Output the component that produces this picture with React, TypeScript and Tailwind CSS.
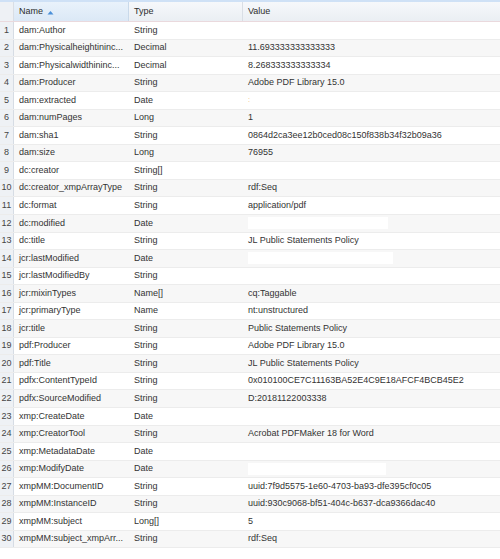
import React from 'react';

type Row = { name: string; type: string; value?: string; blank?: number; dot?: boolean };

const rows: Row[] = [
  { name: 'dam:Author', type: 'String' },
  { name: 'dam:Physicalheightininc...', type: 'Decimal', value: '11.693333333333333' },
  { name: 'dam:Physicalwidthininc...', type: 'Decimal', value: '8.268333333333334' },
  { name: 'dam:Producer', type: 'String', value: 'Adobe PDF Library 15.0' },
  { name: 'dam:extracted', type: 'Date', dot: true },
  { name: 'dam:numPages', type: 'Long', value: '1' },
  { name: 'dam:sha1', type: 'String', value: '0864d2ca3ee12b0ced08c150f838b34f32b09a36' },
  { name: 'dam:size', type: 'Long', value: '76955' },
  { name: 'dc:creator', type: 'String[]', blank: 100 },
  { name: 'dc:creator_xmpArrayType', type: 'String', value: 'rdf:Seq' },
  { name: 'dc:format', type: 'String', value: 'application/pdf' },
  { name: 'dc:modified', type: 'Date', blank: 140 },
  { name: 'dc:title', type: 'String', value: 'JL Public Statements Policy' },
  { name: 'jcr:lastModified', type: 'Date', blank: 145 },
  { name: 'jcr:lastModifiedBy', type: 'String' },
  { name: 'jcr:mixinTypes', type: 'Name[]', value: 'cq:Taggable' },
  { name: 'jcr:primaryType', type: 'Name', value: 'nt:unstructured' },
  { name: 'jcr:title', type: 'String', value: 'Public Statements Policy' },
  { name: 'pdf:Producer', type: 'String', value: 'Adobe PDF Library 15.0' },
  { name: 'pdf:Title', type: 'String', value: 'JL Public Statements Policy' },
  { name: 'pdfx:ContentTypeId', type: 'String', value: '0x010100CE7C11163BA52E4C9E18AFCF4BCB45E2' },
  { name: 'pdfx:SourceModified', type: 'String', value: 'D:20181122003338' },
  { name: 'xmp:CreateDate', type: 'Date', blank: 140 },
  { name: 'xmp:CreatorTool', type: 'String', value: 'Acrobat PDFMaker 18 for Word' },
  { name: 'xmp:MetadataDate', type: 'Date', blank: 140 },
  { name: 'xmp:ModifyDate', type: 'Date', blank: 138 },
  { name: 'xmpMM:DocumentID', type: 'String', value: 'uuid:7f9d5575-1e60-4703-ba93-dfe395cf0c05' },
  { name: 'xmpMM:InstanceID', type: 'String', value: 'uuid:930c9068-bf51-404c-b637-dca9366dac40' },
  { name: 'xmpMM:subject', type: 'Long[]', value: '5' },
  { name: 'xmpMM:subject_xmpArr...', type: 'String', value: 'rdf:Seq' },
];

const App: React.FC = () => {
  return (
    <div
      className="w-[500px] h-[559px] bg-white overflow-hidden text-[9px] text-[#333]"
      style={{ fontFamily: '"Liberation Sans", Arial, sans-serif' }}
    >
      {/* Kopfzeile */}
      <div className="border-t-2 border-[#cfe1f6] border-b border-b-[#ead9dd] bg-gradient-to-b from-[#f6f8fb] to-[#eaeef3] h-[22px] grid grid-cols-[14px_115px_114px_1fr]">
        <div className="border-r border-[#d9dee5] bg-[#eef1f5]" />
        <div className="flex items-center px-[5px] bg-gradient-to-b from-[#e9f2fb] to-[#dbe8f6] border-r border-[#c9d9ea] text-[#2d2d2d]">
          Name
          <svg width="7" height="5" viewBox="0 0 7 5" className="ml-[4px] mt-[1px]">
            <path d="M0.5 4.5 L3.5 1 L6.5 4.5 Z" fill="#4a90d9" />
          </svg>
        </div>
        <div className="flex items-center px-[5px] border-r border-[#d9dee5] text-[#2d2d2d]">Type</div>
        <div className="flex items-center px-[5px] text-[#2d2d2d]">Value</div>
      </div>

      {/* Zeilen */}
      {rows.map((r, i) => (
        <div
          key={r.name}
          className={`h-[17.55px] grid grid-cols-[14px_115px_114px_1fr] border-b border-[#ececec] ${
            i % 2 === 1 ? 'bg-[#f7f7f7]' : 'bg-white'
          }`}
        >
          <div className="bg-[#eef1f5] border-r border-[#d6dce4] flex items-center justify-center text-[#444] whitespace-nowrap">
            {i + 1}
          </div>
          <div className="flex items-center pl-[5px] whitespace-nowrap">{r.name}</div>
          <div className="flex items-center pl-[5px] whitespace-nowrap">{r.type}</div>
          <div className="flex items-center pl-[5px] overflow-hidden whitespace-nowrap">
            {r.value}
            {r.dot && <span className="text-[#f0b56a] text-[7px]">:</span>}
            {r.blank && <span className="h-[12px] bg-white block" style={{ width: r.blank }} />}
          </div>
        </div>
      ))}
    </div>
  );
};

export default App;
